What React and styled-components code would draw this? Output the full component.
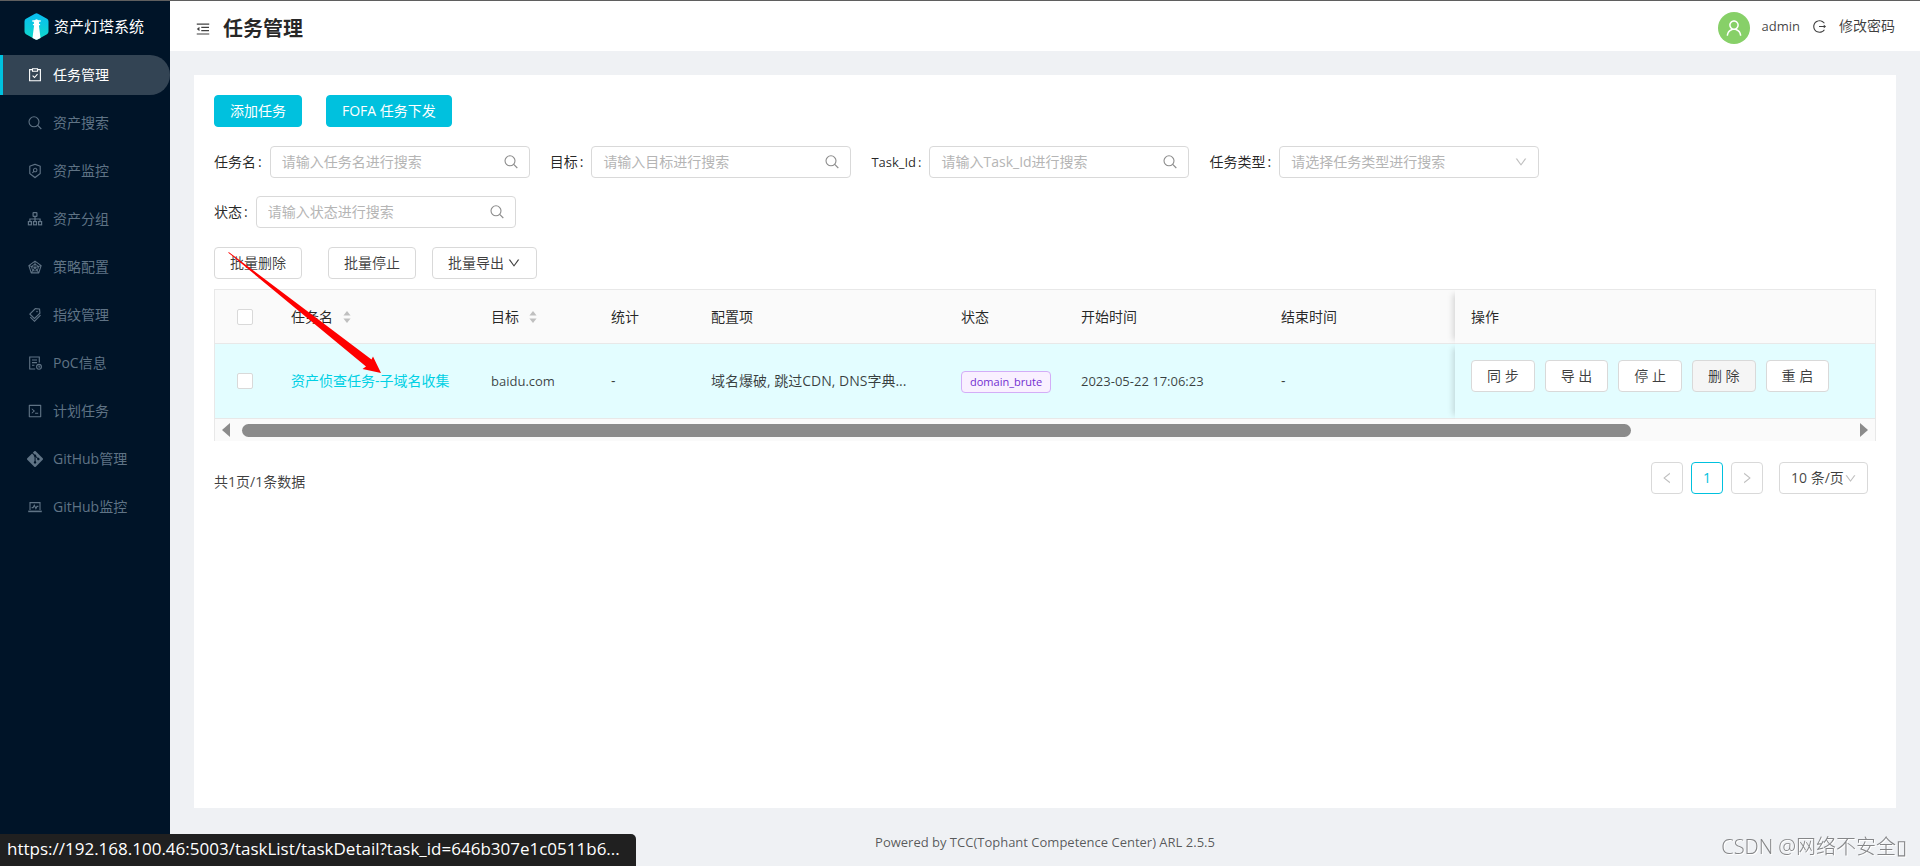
import React, { useState } from 'react';

import styled, { createGlobalStyle } from 'styled-components';
import {
  AiOutlineCode,
  AiOutlineDown,
  AiOutlineLeft,
  AiOutlineLogout,
  AiOutlineMenuFold,
  AiOutlineRadarChart,
  AiOutlineRight,
  AiOutlineSecurityScan,
  AiOutlineTags,
  AiOutlineUser,
} from 'react-icons/ai';
import { SiGit } from 'react-icons/si';

const GlobalStyle = createGlobalStyle`
  *, *::before, *::after {
    box-sizing: border-box;
  }

  body {
    margin: 0;
    font-family: "Open Sans", "Noto Sans CJK SC", sans-serif;
    font-size: 14px;
    line-height: 22px;
    color: rgba(0, 0, 0, 0.75);
    background: #eff1f4;
  }

  button, input, select {
    font: inherit;
    color: inherit;
  }

  a {
    text-decoration: none;
  }
`;

const S = {
  Page: styled.div`
    display: flex;
    min-height: 100vh;
    border-top: 1px solid #5f5f5f;
  `,
  Sider: styled.aside`
    flex: 0 0 170px;
    background: #001428;
  `,
  Brand: styled.a`
    display: flex;
    align-items: center;
    gap: 5px;
    height: 54px;
    padding: 0 0 4px 24px;
    font-size: 15px;
    color: #fff;
  `,
  Menu: styled.nav`
    display: flex;
    flex-direction: column;
    gap: 8px;
  `,
  MenuItem: styled.a`
    display: flex;
    align-items: center;
    gap: 10px;
    height: 40px;
    padding-left: 24px;
    border-left: 3px solid ${(props) => (props.$active ? '#00c1de' : 'transparent')};
    border-radius: 0 20px 20px 0;
    color: ${(props) => (props.$active ? '#fff' : '#5f7385')};
    background: ${(props) => (props.$active ? '#334454' : 'transparent')};

    svg {
      flex: none;
    }
  `,
  Main: styled.div`
    flex: 1;
    min-width: 0;
    display: flex;
    flex-direction: column;
  `,
  Header: styled.header`
    display: flex;
    align-items: center;
    justify-content: space-between;
    height: 50px;
    padding: 0 25px;
    background: #fff;
  `,
  HeaderTitle: styled.div`
    display: flex;
    align-items: center;
    gap: 12px;
    padding-top: 6px;
  `,
  HeaderUser: styled.div`
    display: flex;
    align-items: center;
    gap: 12px;
  `,
  IconButton: styled.button`
    display: flex;
    padding: 0;
    border: none;
    background: none;
  `,
  Title: styled.h1`
    margin: 0;
    font-size: 20px;
    line-height: 30px;
    font-weight: 700;
    color: rgba(0, 0, 0, 0.85);
  `,
  Avatar: styled.span`
    display: flex;
    align-items: center;
    justify-content: center;
    width: 32px;
    height: 32px;
    margin-top: 4px;
    border-radius: 50%;
    color: #fff;
    background: #87d068;
  `,
  Latin: styled.span`
    font-size: 13px;
  `,
  PlainLink: styled.a`
    color: rgba(0, 0, 0, 0.75);
  `,
  Card: styled.main`
    position: relative;
    flex: 1;
    margin: 24px 24px 0;
    padding: 20px;
    background: #fff;
  `,
  ButtonRow: styled.div`
    display: flex;
    gap: ${(props) => props.$gap}px;
  `,
  Button: styled.button`
    display: inline-flex;
    align-items: center;
    justify-content: center;
    gap: 3px;
    height: 32px;
    padding: 0 15px;
    white-space: pre;
    border: 1px solid ${(props) => (props.$primary ? '#00c1de' : '#d9d9d9')};
    border-radius: 4px;
    color: ${(props) => (props.$primary ? '#fff' : 'rgba(0, 0, 0, 0.75)')};
    background: ${(props) => (props.$primary ? '#00c1de' : '#fff')};

    &:disabled {
      background: #f5f5f5;
    }
  `,
  BatchGroup: styled.div`
    display: flex;
    gap: 16px;
  `,
  Filters: styled.form`
    display: flex;
    flex-wrap: wrap;
    gap: 18px 20px;
    max-width: 1400px;
    margin: 19px 0;
  `,
  Field: styled.div`
    display: flex;
    align-items: center;

    label {
      font-size: ${(props) => (props.$latin ? 13 : 14)}px;
      color: rgba(0, 0, 0, 0.85);
    }

    label::after {
      content: ":";
      margin: 0 8px 0 2px;
    }
  `,
  Control: styled.div`
    display: flex;
    align-items: center;
    width: 260px;
    height: 32px;
    padding-right: 10px;
    border: 1px solid #d9d9d9;
    border-radius: 4px;
    background: #fff;
    color: #8c8c8c;

    input, select {
      flex: 1;
      min-width: 0;
      height: 30px;
      padding: 0 0 0 11px;
      border: none;
      outline: none;
      appearance: none;
      background: none;
    }

    input {
      padding-bottom: 2px;
    }

    input::placeholder {
      color: #b5b5b5;
    }

    select {
      color: #b5b5b5;
    }
  `,
  TableBox: styled.div`
    margin-top: 10px;
    border: 1px solid #e8e8e8;
    border-bottom: none;
  `,
  Table: styled.table`
    width: 100%;
    table-layout: fixed;
    border-collapse: separate;
    border-spacing: 0;

    th, td {
      padding: 0 16px;
      text-align: left;
      font-weight: 400;
      border-bottom: 1px solid #e8e8e8;
      white-space: nowrap;
    }

    th {
      height: 54px;
      color: rgba(0, 0, 0, 0.85);
      background: #fafafa;
    }

    td {
      height: 75px;
      background: #e3fdff;
    }

    th:first-child, td:first-child {
      padding: 0 22px;
    }

    th:last-child, td:last-child {
      box-shadow: -6px 0 6px -4px rgba(0, 0, 0, 0.15);
      clip-path: inset(0 0 0 -10px);
    }
  `,
  HeadCell: styled.span`
    display: flex;
    align-items: center;
    gap: 10px;
  `,
  Checkbox: styled.input`
    display: block;
    appearance: none;
    width: 16px;
    height: 16px;
    margin: 0;
    border: 1px solid #d9d9d9;
    border-radius: 2px;
    background: #fff;
  `,
  TaskLink: styled.a`
    color: #00d0e4;
  `,
  Ellipsis: styled.div`
    width: 200px;
    overflow: hidden;
    text-overflow: ellipsis;
  `,
  Tag: styled.span`
    display: inline-block;
    height: 22px;
    padding: 0 8px;
    font-size: 11px;
    line-height: 20px;
    border: 1px solid #d3adf7;
    border-radius: 4px;
    color: #722ed1;
    background: #f9f0ff;
  `,
  RowActions: styled.div`
    display: flex;
    gap: 10px;
    padding-bottom: 10px;
  `,
  ScrollBar: styled.div`
    display: flex;
    align-items: center;
    gap: 12px;
    height: 22px;
    padding: 0 7px;
    background: #fafafa;
    color: #8b8b8b;
  `,
  ScrollTrack: styled.div`
    flex: 1;
  `,
  ScrollThumb: styled.div`
    width: 86.5%;
    height: 13px;
    border-radius: 7px;
    background: #8b8b8b;
  `,
  TableFooter: styled.div`
    display: flex;
    justify-content: space-between;
    margin-top: 21px;
    padding-right: 8px;
  `,
  Total: styled.span`
    padding-top: 9px;
  `,
  Pager: styled.div`
    display: flex;
    gap: 8px;
  `,
  PageButton: styled.button`
    display: flex;
    align-items: center;
    justify-content: center;
    width: 32px;
    height: 32px;
    padding: 0;
    border: 1px solid ${(props) => (props.$active ? '#00c1de' : '#d9d9d9')};
    border-radius: 4px;
    color: ${(props) => (props.$active ? '#00c1de' : '#bfbfbf')};
    background: #fff;
  `,
  PageSize: styled.div`
    display: flex;
    align-items: center;
    width: 89px;
    height: 32px;
    margin-left: 8px;
    padding: 0 10px 0 11px;
    border: 1px solid #d9d9d9;
    border-radius: 4px;
    color: #bfbfbf;

    select {
      flex: 1;
      min-width: 0;
      padding: 0;
      border: none;
      appearance: none;
      background: none;
      color: rgba(0, 0, 0, 0.75);
    }

    svg {
      flex: none;
    }
  `,
  Footer: styled.footer`
    display: flex;
    align-items: center;
    justify-content: center;
    height: 58px;
    padding-top: 10px;
    font-size: 13px;
    color: rgba(0, 0, 0, 0.65);
  `,
  Pointer: styled.svg`
    position: absolute;
    left: 34px;
    top: 177px;
    pointer-events: none;
  `,
  StatusBubble: styled.div`
    position: fixed;
    left: 0;
    bottom: 0;
    height: 32px;
    padding: 0 16px 0 7px;
    font-size: 17px;
    line-height: 30px;
    border-radius: 0 5px 0 0;
    color: #fff;
    background: #202020;
  `,
  Watermark: styled.div`
    position: fixed;
    right: 13px;
    bottom: 4px;
    font-size: 20px;
    line-height: 30px;
    font-weight: 300;
    color: #858688;
    text-shadow: 1px 1px 0 #fff;
  `,
};

const TaskIcon = () => (
  <svg width="16" height="16" viewBox="0 0 16 16" fill="none" stroke="currentColor" strokeWidth="1.100" aria-hidden="true">
    <path d="M5.500 2.600H2.600v11.200h10.800V2.600h-2.900" />
    <path d="M5.500 1.800h5v2.400h-5z" />
    <path d="M5.600 8.600l1.900 1.900 3-3.400" />
  </svg>
);

const SearchIcon = ({ size = 16 }) => (
  <svg width={size} height={size} viewBox="0 0 16 16" fill="none" stroke="currentColor" strokeWidth="1.100" aria-hidden="true">
    <circle cx="7" cy="6.800" r="5" />
    <path d="M10.700 10.400l3.600 3.600" />
  </svg>
);

const GroupIcon = () => (
  <svg width="16" height="16" viewBox="0 0 16 16" fill="none" stroke="currentColor" strokeWidth="1.200" aria-hidden="true">
    <rect x="6.100" y="1.600" width="3.800" height="3.800" rx="0.500" />
    <path d="M8 5.400v5M2.900 10.400V8h10.200v2.400" />
    <rect x="1.400" y="10.600" width="3" height="3.200" />
    <rect x="6.500" y="10.600" width="3" height="3.200" />
    <rect x="11.600" y="10.600" width="3" height="3.200" />
  </svg>
);

const PocIcon = () => (
  <svg width="16" height="16" viewBox="0 0 16 16" fill="none" stroke="currentColor" strokeWidth="1.100" aria-hidden="true">
    <path d="M8.200 14H2.700V2h9.600v5.600" />
    <path d="M5 5h5M5 7.600h5M5 10.200h2.400" />
    <circle cx="12" cy="11.800" r="2.400" />
    <path d="M12 10.600v1.400h1.200" />
  </svg>
);

const MonitorIcon = () => (
  <svg width="16" height="16" viewBox="0 0 16 16" fill="none" stroke="currentColor" strokeWidth="1.100" aria-hidden="true">
    <path d="M3 11V3.600h10V11" />
    <path d="M1.200 12.400h13.600" strokeWidth="1.600" />
    <path d="M4.600 8.600h1.500l1.200-2.400 1.600 3.400 1.100-2.200h1.400" />
  </svg>
);

const MENU = [
  { label: '任务管理', icon: TaskIcon },
  { label: '资产搜索', icon: SearchIcon },
  { label: '资产监控', icon: AiOutlineSecurityScan },
  { label: '资产分组', icon: GroupIcon },
  { label: '策略配置', icon: AiOutlineRadarChart },
  { label: '指纹管理', icon: AiOutlineTags },
  { label: 'PoC信息', icon: PocIcon },
  { label: '计划任务', icon: AiOutlineCode },
  { label: 'GitHub管理', icon: SiGit },
  { label: 'GitHub监控', icon: MonitorIcon },
];

const FILTERS = [
  { id: 'name', label: '任务名', placeholder: '请输入任务名进行搜索' },
  { id: 'target', label: '目标', placeholder: '请输入目标进行搜索' },
  { id: 'task_id', label: 'Task_Id', placeholder: '请输入Task_Id进行搜索', latin: true },
  { id: 'type', label: '任务类型', placeholder: '请选择任务类型进行搜索', select: true },
  { id: 'status', label: '状态', placeholder: '请输入状态进行搜索' },
];

const COLUMNS = [
  { title: '任务名', width: 200, sorter: true },
  { title: '目标', width: 120, sorter: true },
  { title: '统计', width: 100 },
  { title: '配置项', width: 250 },
  { title: '状态', width: 120 },
  { title: '开始时间', width: 200 },
  { title: '结束时间', width: 190 },
  { title: '操作' },
];

const TASKS = [
  {
    name: '资产侦查任务-子域名收集',
    target: 'baidu.com',
    statistic: '-',
    options: '域名爆破, 跳过CDN, DNS字典...',
    status: 'domain_brute',
    start: '2023-05-22 17:06:23',
    end: '-',
  },
];

const Logo = () => (
  <svg width="25" height="27" viewBox="0 0 25 27" aria-hidden="true">
    <defs>
      <linearGradient id="logo" x1="0" y1="0" x2="0" y2="1">
        <stop offset="0" stopColor="#08bdf2" />
        <stop offset="1" stopColor="#10d8c8" />
      </linearGradient>
    </defs>
    <path
      d="M11 .8a3 3 0 0 1 3 0l9 5a3 3 0 0 1 1.500 2.600v10.200a3 3 0 0 1-1.500 2.600l-9 5a3 3 0 0 1-3 0l-9-5A3 3 0 0 1 .5 18.600V8.400A3 3 0 0 1 2 5.800z"
      fill="url(#logo)"
    />
    <path
      d="M12.500 6.200l2.200 1h2v1.600h-1.600v2.200h1v1.300h-1.200l1.600 12.600-3 1.600a2 2 0 0 1-2 0l-3-1.600 1.600-12.600H8.900V11h1V8.800H8.300V7.200h2z"
      fill="#fff"
    />
  </svg>
);

const Sorter = () => (
  <svg width="8" height="14" viewBox="0 0 8 14" fill="#bfbfbf" aria-hidden="true">
    <path d="M4 1l3.600 4.600H.4z" />
    <path d="M4 13l3.600-4.600H.4z" />
  </svg>
);

const ScrollArrow = ({ right }) => (
  <svg width="8" height="14" viewBox="0 0 8 14" fill="currentColor" aria-hidden="true">
    <path d={right ? 'M0 0l8 7-8 7z' : 'M8 0L0 7l8 7z'} />
  </svg>
);

const FilterField = ({ id, label, placeholder, select, latin }) => (
  <S.Field $latin={latin}>
    <label htmlFor={id}>{label}</label>
    <S.Control>
      {select ? (
        <select id={id} defaultValue="">
          <option value="">{placeholder}</option>
        </select>
      ) : (
        <input id={id} type="text" placeholder={placeholder} />
      )}
      {select ? <AiOutlineDown size={14} color="#bfbfbf" /> : <SearchIcon />}
    </S.Control>
  </S.Field>
);

const App = () => {
  const [active, setActive] = useState('任务管理');

  return (
    <>
      <GlobalStyle />
      <S.Page>
        <S.Sider>
          <S.Brand href="#">
            <Logo />
            资产灯塔系统
          </S.Brand>
          <S.Menu>
            {MENU.map(({ label, icon: Icon }) => (
              <S.MenuItem
                key={label}
                href="#"
                $active={label === active}
                onClick={() => setActive(label)}
              >
                <Icon size={16} />
                {label}
              </S.MenuItem>
            ))}
          </S.Menu>
        </S.Sider>

        <S.Main>
          <S.Header>
            <S.HeaderTitle>
              <S.IconButton type="button" aria-label="收起菜单">
                <AiOutlineMenuFold size={16} />
              </S.IconButton>
              <S.Title>任务管理</S.Title>
            </S.HeaderTitle>
            <S.HeaderUser>
              <S.Avatar>
                <AiOutlineUser size={20} />
              </S.Avatar>
              <S.Latin>admin</S.Latin>
              <S.IconButton type="button" aria-label="退出登录">
                <AiOutlineLogout size={15} />
              </S.IconButton>
              <S.PlainLink href="#">修改密码</S.PlainLink>
            </S.HeaderUser>
          </S.Header>

          <S.Card>
            <S.ButtonRow $gap={24}>
              <S.Button type="button" $primary>添加任务</S.Button>
              <S.Button type="button" $primary>FOFA 任务下发</S.Button>
            </S.ButtonRow>

            <S.Filters>
              {FILTERS.map((filter) => (
                <FilterField key={filter.id} {...filter} />
              ))}
            </S.Filters>

            <S.ButtonRow $gap={26}>
              <S.Button type="button">批量删除</S.Button>
              <S.BatchGroup>
                <S.Button type="button">批量停止</S.Button>
                <S.Button type="button">
                  批量导出
                  <AiOutlineDown size={14} />
                </S.Button>
              </S.BatchGroup>
            </S.ButtonRow>

            <S.TableBox>
              <S.Table>
                <colgroup>
                  <col width="60" />
                  {COLUMNS.map((column) => (
                    <col key={column.title} width={column.width} />
                  ))}
                </colgroup>
                <thead>
                  <tr>
                    <th>
                      <S.Checkbox type="checkbox" aria-label="全选" />
                    </th>
                    {COLUMNS.map((column) => (
                      <th key={column.title}>
                        <S.HeadCell>
                          {column.title}
                          {column.sorter && <Sorter />}
                        </S.HeadCell>
                      </th>
                    ))}
                  </tr>
                </thead>
                <tbody>
                  {TASKS.map((task) => (
                    <tr key={task.name}>
                      <td>
                        <S.Checkbox type="checkbox" aria-label={task.name} />
                      </td>
                      <td><S.TaskLink href="#">{task.name}</S.TaskLink></td>
                      <td><S.Latin>{task.target}</S.Latin></td>
                      <td>{task.statistic}</td>
                      <td><S.Ellipsis>{task.options}</S.Ellipsis></td>
                      <td><S.Tag>{task.status}</S.Tag></td>
                      <td><S.Latin>{task.start}</S.Latin></td>
                      <td>{task.end}</td>
                      <td>
                        <S.RowActions>
                          <S.Button type="button">同 步</S.Button>
                          <S.Button type="button">导 出</S.Button>
                          <S.Button type="button">停 止</S.Button>
                          <S.Button type="button" disabled>删 除</S.Button>
                          <S.Button type="button">重 启</S.Button>
                        </S.RowActions>
                      </td>
                    </tr>
                  ))}
                </tbody>
              </S.Table>
              <S.ScrollBar>
                <ScrollArrow />
                <S.ScrollTrack>
                  <S.ScrollThumb />
                </S.ScrollTrack>
                <ScrollArrow right />
              </S.ScrollBar>
            </S.TableBox>

            <S.TableFooter>
              <S.Total>共1页/1条数据</S.Total>
              <S.Pager>
                <S.PageButton type="button" aria-label="上一页">
                  <AiOutlineLeft size={14} />
                </S.PageButton>
                <S.PageButton type="button" $active>1</S.PageButton>
                <S.PageButton type="button" aria-label="下一页">
                  <AiOutlineRight size={14} />
                </S.PageButton>
                <S.PageSize>
                  <select aria-label="每页条数" defaultValue="10">
                    <option value="10">10 条/页</option>
                  </select>
                  <AiOutlineDown size={13} />
                </S.PageSize>
              </S.Pager>
            </S.TableFooter>

            <S.Pointer width="156" height="124" viewBox="0 0 156 124" aria-hidden="true">
              <path d="M0 .4L1 .2 143.500 107.500 145 104.500 153 121 134.500 117 138 114.500z" fill="#fe0000" />
            </S.Pointer>
          </S.Card>

          <S.Footer>Powered by TCC(Tophant Competence Center) ARL 2.5.5</S.Footer>
        </S.Main>
      </S.Page>

      <S.StatusBubble>
        https://192.168.100.46:5003/taskList/taskDetail?task_id=646b307e1c0511b6...
      </S.StatusBubble>
      <S.Watermark>CSDN @网络不安全▯</S.Watermark>
    </>
  );
};

export default App;
